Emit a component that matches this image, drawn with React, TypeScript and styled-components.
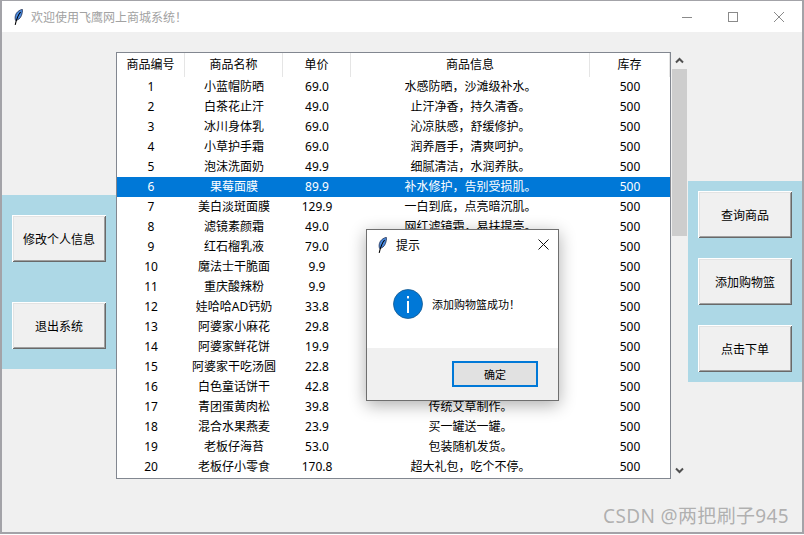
import React from "react";
import styled, { createGlobalStyle } from "styled-components";

const Global = createGlobalStyle`
  html, body { margin: 0; padding: 0; background: #fff; }
  body { font-family: "Noto Sans", "Noto Sans CJK SC", sans-serif; font-size: 12px; color: #000; }
`;

const Window = styled.div`
  position: relative;
  box-sizing: border-box;
  width: 804px;
  height: 534px;
  border: 2px solid #a3a3a8;
  border-top-width: 1px;
  background: #f0f0f0;
  overflow: hidden;
  display: flex;
  flex-direction: column;
`;

const TitleBar = styled.div`
  height: 31px;
  flex: none;
  background: #fff;
  display: flex;
  align-items: center;
  padding-left: 12px;
`;

const TitleText = styled.span`
  margin-left: 8px;
  color: #a2a2a2;
  font-size: 12px;
  flex: 1;
`;

const WinControl = styled.div`
  width: 46px;
  height: 31px;
  display: flex;
  align-items: center;
  justify-content: center;
`;

const Content = styled.div`
  flex: 1;
  display: flex;
  align-items: flex-start;
`;

const SidePanel = styled.div<{ $top: number; $gap: number; $padY: number }>`
  width: 114px;
  flex: none;
  box-sizing: border-box;
  margin-top: ${(p) => p.$top}px;
  padding: ${(p) => p.$padY}px 10px;
  background: #add8e6;
  display: flex;
  flex-direction: column;
  gap: ${(p) => p.$gap}px;
`;

const TkButton = styled.button`
  width: 94px;
  height: 47px;
  padding: 0;
  border: 0;
  background: #f0f0f0;
  font: inherit;
  font-size: 12px;
  color: #000;
  box-shadow:
    inset 1px 1px 0 #fff,
    inset -1px -1px 0 #696969,
    inset 2px 2px 0 #e3e3e3,
    inset -2px -2px 0 #a0a0a0;
`;

const Table = styled.div`
  width: 555px;
  height: 427px;
  flex: none;
  box-sizing: border-box;
  margin-top: 20px;
  border: 1px solid #828790;
  background: #fff;
`;

const Row = styled.div<{ $selected?: boolean }>`
  display: grid;
  grid-template-columns: 68px 98px 68px 239px 80px;
  height: 20px;
  line-height: 20px;
  text-align: center;
  white-space: nowrap;
  background: ${(p) => (p.$selected ? "#0078d7" : "transparent")};
  color: ${(p) => (p.$selected ? "#fff" : "#000")};
`;

const HeaderRow = styled(Row)`
  height: 24px;
  line-height: 23px;
`;

const HeaderCell = styled.div`
  border-right: 1px solid #e5e5e5;
`;

const Scrollbar = styled.div`
  width: 15px;
  height: 427px;
  flex: none;
  margin: 20px 1px 0;
  display: flex;
  flex-direction: column;
  align-items: center;
`;

const ArrowSlot = styled.div`
  height: 17px;
  flex: none;
  width: 15px;
  display: flex;
  align-items: center;
  justify-content: center;
`;

const Track = styled.div`
  flex: 1;
  width: 15px;
`;

const Thumb = styled.div`
  height: 167px;
  background: #cdcdcd;
`;

const Dialog = styled.div`
  position: absolute;
  left: 364px;
  top: 228px;
  width: 193px;
  height: 172px;
  box-sizing: border-box;
  border: 1px solid #6f6f6f;
  background: #fff;
  box-shadow: 0 4px 16px rgba(0, 0, 0, 0.32);
  display: flex;
  flex-direction: column;
`;

const DialogTitle = styled.div`
  height: 29px;
  flex: none;
  display: flex;
  align-items: center;
  padding-left: 11px;
`;

const DialogTitleText = styled.span`
  margin-left: 9px;
  flex: 1;
`;

const DialogClose = styled.div`
  width: 30px;
  height: 29px;
  display: flex;
  align-items: center;
  justify-content: center;
`;

const DialogBody = styled.div`
  flex: 1;
  display: flex;
  align-items: center;
  padding-left: 26px;
  box-sizing: border-box;
`;

const DialogMessage = styled.span`
  margin-left: 9px;
  font-size: 11px;
`;

const DialogFooter = styled.div`
  height: 52px;
  flex: none;
  background: #f0f0f0;
  display: flex;
  justify-content: flex-end;
  padding: 13px 20px 0 0;
  box-sizing: border-box;
`;

const OkButton = styled.button`
  width: 86px;
  height: 26px;
  padding: 0;
  border: 2px solid #0078d7;
  background: #e1e1e1;
  font: inherit;
  font-size: 11px;
  color: #000;
`;

const Watermark = styled.div`
  position: absolute;
  right: 13px;
  bottom: 4px;
  font-size: 19px;
  letter-spacing: 0.35px;
  line-height: 24px;
  color: rgba(120, 120, 120, 0.55);
  white-space: nowrap;
`;

const Feather = () => (
  <svg width="9" height="16" viewBox="0 0 9 16" fill="none">
    <path d="M8.4.4C5.4.8 2.2 3.2 1.4 6.6 1 8.4 1 10 1.6 11.4 4 11.2 6.4 9.4 7.4 6.6 8.2 4.4 8.6 2.2 8.4.4Z" fill="#4a8be0" stroke="#1a2a4e" strokeWidth=".8" />
    <path d="M6.6 3C4.4 5.6 2.6 9.6 1.2 15.8" stroke="#000" strokeWidth="1.1" />
  </svg>
);

const Chevron = ({ down }: { down?: boolean }) => (
  <svg width="9" height="7" viewBox="0 0 9 7">
    <path d={down ? "M1 1.5 4.5 5 8 1.5" : "M1 5.5 4.5 2 8 5.5"} fill="none" stroke="#505050" strokeWidth="2" />
  </svg>
);

const InfoIcon = () => (
  <svg width="30" height="30" viewBox="0 0 30 30">
    <circle cx="15" cy="15" r="14.5" fill="#0078d7" stroke="#17598f" strokeWidth=".8" />
    <rect x="14" y="12" width="2" height="12" fill="#fff" />
    <rect x="14" y="7" width="2" height="2.4" fill="#fff" />
  </svg>
);

const rows: [string, string, string, string][] = [
  ["1", "小蓝帽防晒", "69.0", "水感防晒，沙滩级补水。"],
  ["2", "白茶花止汗", "49.0", "止汗净香，持久清香。"],
  ["3", "冰川身体乳", "69.0", "沁凉肤感，舒缓修护。"],
  ["4", "小草护手霜", "69.0", "润养唇手，清爽呵护。"],
  ["5", "泡沫洗面奶", "49.9", "细腻清洁，水润养肤。"],
  ["6", "果莓面膜", "89.9", "补水修护，告别受损肌。"],
  ["7", "美白淡斑面膜", "129.9", "一白到底，点亮暗沉肌。"],
  ["8", "滤镜素颜霜", "49.0", "网红滤镜霜，易扶提亮。"],
  ["9", "红石榴乳液", "79.0", ""],
  ["10", "魔法士干脆面", "9.9", ""],
  ["11", "重庆酸辣粉", "9.9", ""],
  ["12", "娃哈哈AD钙奶", "33.8", ""],
  ["13", "阿婆家小麻花", "29.8", ""],
  ["14", "阿婆家鲜花饼", "19.9", ""],
  ["15", "阿婆家干吃汤圆", "22.8", ""],
  ["16", "白色童话饼干", "42.8", ""],
  ["17", "青团蛋黄肉松", "39.8", "传统艾草制作。"],
  ["18", "混合水果燕麦", "23.9", "买一罐送一罐。"],
  ["19", "老板仔海苔", "53.0", "包装随机发货。"],
  ["20", "老板仔小零食", "170.8", "超大礼包，吃个不停。"],
];

export default function App() {
  return (
    <>
      <Global />
      <Window>
        <TitleBar>
          <Feather />
          <TitleText>欢迎使用飞鹰网上商城系统！</TitleText>
          <WinControl>
            <svg width="10" height="10" viewBox="0 0 10 10"><path d="M0 5.5h10" stroke="#8a8a8a" /></svg>
          </WinControl>
          <WinControl>
            <svg width="10" height="10" viewBox="0 0 10 10"><rect x=".5" y=".5" width="9" height="9" fill="none" stroke="#8a8a8a" /></svg>
          </WinControl>
          <WinControl>
            <svg width="10" height="10" viewBox="0 0 10 10"><path d="M0 0 10 10M10 0 0 10" stroke="#8a8a8a" /></svg>
          </WinControl>
        </TitleBar>
        <Content>
          <SidePanel $top={163} $gap={40} $padY={20}>
            <TkButton>修改个人信息</TkButton>
            <TkButton>退出系统</TkButton>
          </SidePanel>
          <Table>
            <HeaderRow>
              <HeaderCell>商品编号</HeaderCell>
              <HeaderCell>商品名称</HeaderCell>
              <HeaderCell>单价</HeaderCell>
              <HeaderCell>商品信息</HeaderCell>
              <HeaderCell>库存</HeaderCell>
            </HeaderRow>
            {rows.map((r) => (
              <Row key={r[0]} $selected={r[0] === "6"}>
                <div>{r[0]}</div>
                <div>{r[1]}</div>
                <div>{r[2]}</div>
                <div>{r[3]}</div>
                <div>500</div>
              </Row>
            ))}
          </Table>
          <Scrollbar>
            <ArrowSlot><Chevron /></ArrowSlot>
            <Track><Thumb /></Track>
            <ArrowSlot><Chevron down /></ArrowSlot>
          </Scrollbar>
          <SidePanel $top={149} $gap={20} $padY={10}>
            <TkButton>查询商品</TkButton>
            <TkButton>添加购物篮</TkButton>
            <TkButton>点击下单</TkButton>
          </SidePanel>
        </Content>
        <Dialog>
          <DialogTitle>
            <Feather />
            <DialogTitleText>提示</DialogTitleText>
            <DialogClose>
              <svg width="11" height="11" viewBox="0 0 11 11"><path d="M.5.5l10 10M10.5.5l-10 10" stroke="#111" /></svg>
            </DialogClose>
          </DialogTitle>
          <DialogBody>
            <InfoIcon />
            <DialogMessage>添加购物篮成功！</DialogMessage>
          </DialogBody>
          <DialogFooter>
            <OkButton>确定</OkButton>
          </DialogFooter>
        </Dialog>
        <Watermark>CSDN @两把刷子945</Watermark>
      </Window>
    </>
  );
}
